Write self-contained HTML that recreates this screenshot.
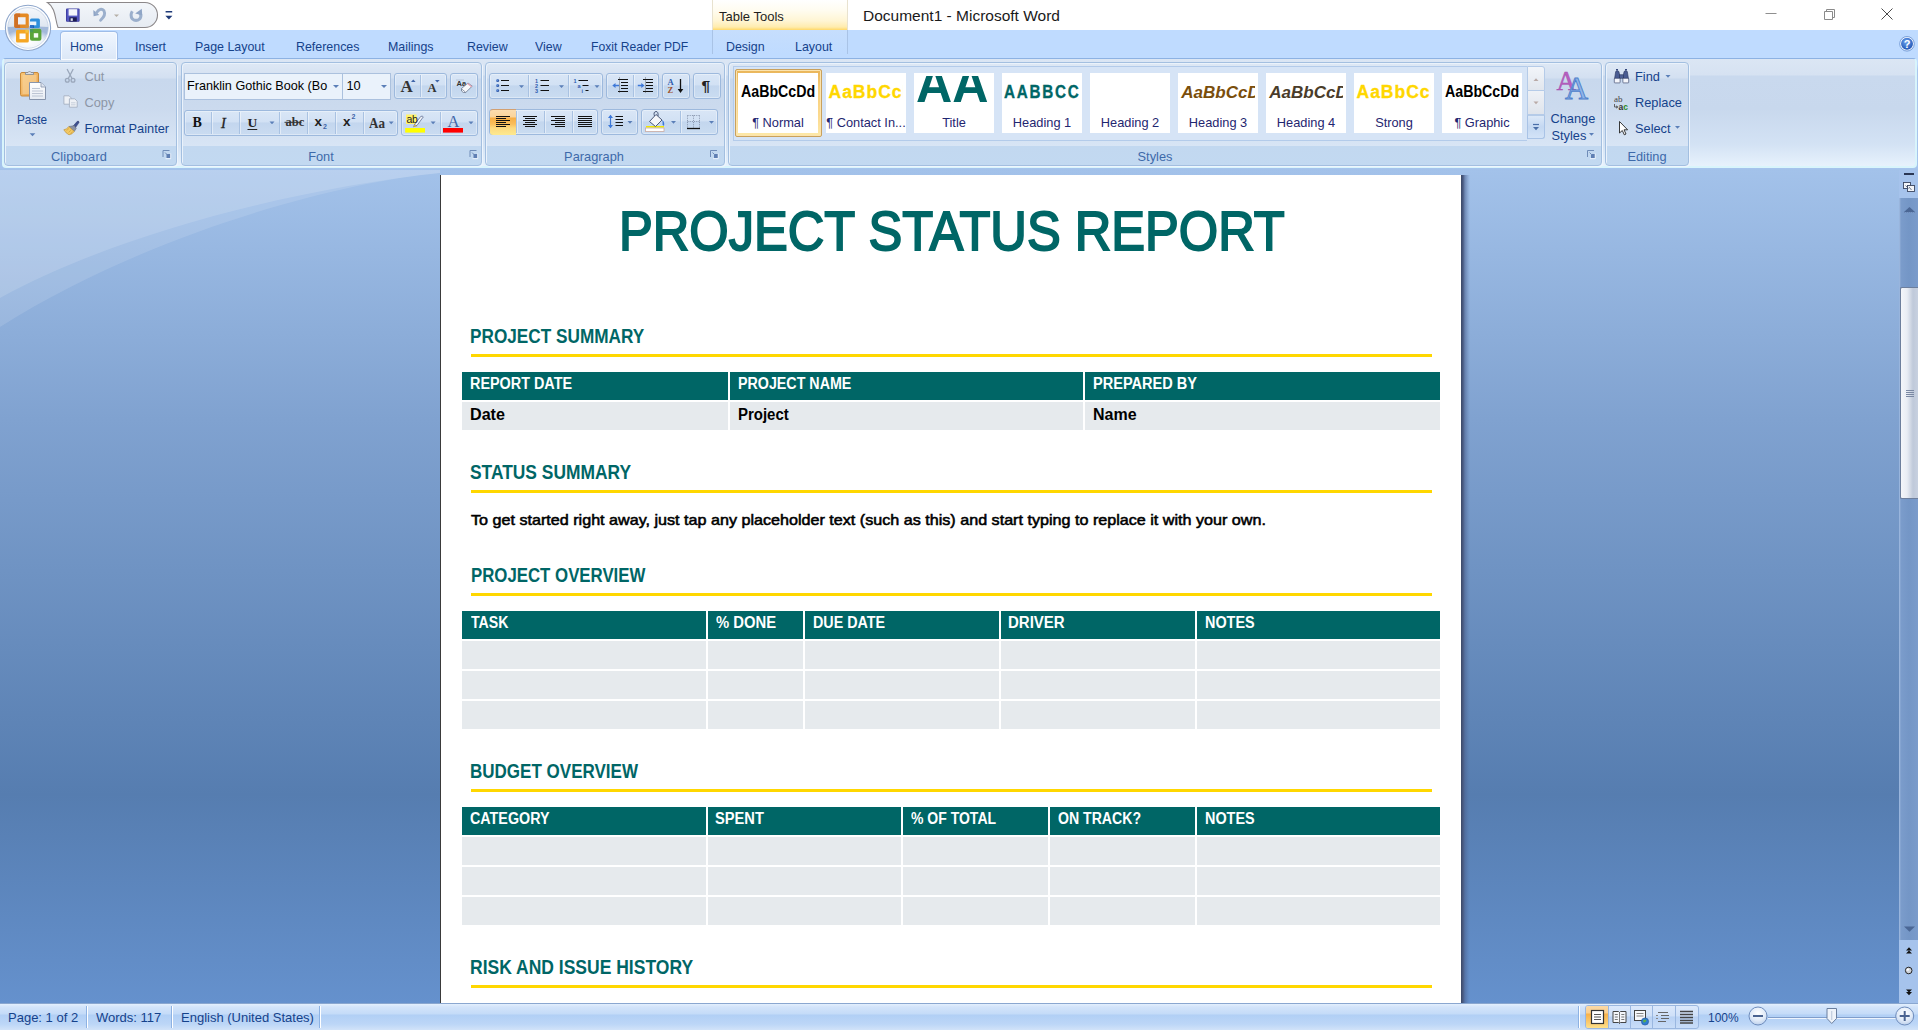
<!DOCTYPE html>
<html lang="en">
<head>
<meta charset="utf-8">
<title>Document1 - Microsoft Word</title>
<style>
*{box-sizing:border-box;margin:0;padding:0}
html,body{width:1918px;height:1030px;overflow:hidden;background:#fff}
body{position:relative;font-family:"Liberation Sans","DejaVu Sans",sans-serif;font-size:12px;color:#15428b}
.abs{position:absolute}
.t{position:absolute;white-space:nowrap;line-height:1}
/* ---------- title bar ---------- */
#titlebar{left:0;top:0;width:1918px;height:30px;background:#fff}
#tabstrip{left:0;top:30px;width:1918px;height:28px;background:#bfdbff}
#ctx{left:712px;top:0;width:136px;height:30px;background:linear-gradient(#ffffff 0%,#fffcf0 35%,#fff5d3 70%,#ffecae 90%,#ffd868 100%);border-left:1px solid #e8e2cf;border-right:1px solid #e8e2cf}
#ctx2{left:712px;top:30px;width:136px;height:24px;border-left:1px solid #a9c3e6;border-right:1px solid #a9c3e6;background:linear-gradient(#c6defd,#bfdbff)}
.tab{z-index:3;position:absolute;transform:scaleX(.97);transform-origin:0 50%;top:39px;font-size:12.8px;color:#15428b;white-space:nowrap;line-height:15px}
#hometab{z-index:2;left:60px;top:31px;width:58px;height:29px;border:1px solid #9ebce8;border-bottom:none;border-radius:4px 4px 0 0;background:linear-gradient(#f0f6fe 0%,#e3edfb 60%,#dbe7f6 100%);box-shadow:inset 0 0 0 1px #f6faff}
/* ---------- ribbon ---------- */
#ribbon{left:2px;top:58px;width:1915px;height:110px;background:linear-gradient(#dbe6f4 0px,#d6e2f2 16px,#c9d9ee 17px,#c8d8ed 50px,#d3e2f4 85px,#e6f1fc 106px,#e9f4fd 110px);border:2px solid #d9f5fc;border-top:1px solid #8db2e3;border-radius:4px}
#ribbonbot{left:0;top:58px;width:1918px;height:112px;background:linear-gradient(#bfdbff 0px,#bfdbff 6px,#a9c6ee 12px,#a5c3ec 112px)}
.grp{position:absolute;top:62px;height:104px;border:1px solid #a3bfe0;border-radius:4px;background:linear-gradient(#dee8f5 0px,#d3e0f1 15px,#c8d8ed 16px,#cbdaee 45px,#d8e5f5 83px,#c2d8f0 83px,#c2d9f1 104px);box-shadow:1px 1px 0 #eef5fd, inset 1px 1px 0 #eaf2fb}
.glabel{position:absolute;top:149px;font-size:12.8px;color:#3e6aaa;white-space:nowrap;line-height:15px;text-align:center}
.launch{position:absolute;top:151px;width:8px;height:8px}
.bg{position:absolute;height:26px;border:1px solid #9db9dd;border-radius:3px;background:linear-gradient(#d9e6f6 0%,#d2e1f4 45%,#c3d6ee 50%,#cadcf1 100%);box-shadow:inset 0 0 0 1px rgba(255,255,255,.35)}
.dv{position:absolute;top:1px;bottom:1px;width:1px;background:#a9c2e2;box-shadow:1px 0 0 rgba(255,255,255,.45)}
.combo{position:absolute;height:27px;border:1px solid #abc1de;background:#eaf2fb;color:#000;font-size:13px}
.arr{position:absolute;width:0;height:0;border-left:3px solid transparent;border-right:3px solid transparent;border-top:3px solid #5b7fb8}
.rt{position:absolute;white-space:nowrap;font-size:12.8px;line-height:15px;color:#15428b}
.gray{color:#8d96a6}
.sf{font-family:"Liberation Serif","DejaVu Serif",serif}
/* ---------- workspace ---------- */
#work{left:0;top:169px;width:1918px;height:834px;background:linear-gradient(#a3c2ea 0%,#80a2d0 30%,#567db0 75%,#6591cd 100%)}
#page{left:440px;top:175px;width:1021px;height:828px;background:#fff;border-left:1px solid #3a3a3a;}
/* document */
.doc{font-family:"Liberation Sans",sans-serif;color:#000}
.h1{position:absolute;left:471px;color:#006666;font-weight:bold;font-size:19px;line-height:20px;white-space:nowrap;transform-origin:0 50%}
.yl{position:absolute;left:471px;width:961px;height:3px;background:#ffd700}
.th{position:absolute;height:28px;background:#006666}
.td{position:absolute;height:28px;background:#e6eaed}
.dt{position:absolute;white-space:nowrap;line-height:1;transform-origin:0 50%;font-family:"Liberation Sans",sans-serif}
/* ---------- status ---------- */
#status{left:0;top:1003px;width:1918px;height:27px;background:linear-gradient(#e3effd 0px,#d3e4fa 3px,#c4dbf8 10px,#b1cff5 11px,#bcd6f7 20px,#d5e5f9 27px);border-top:1px solid #8aa7d0}
.st{position:absolute;top:1010px;font-size:13px;line-height:15px;color:#15428b;white-space:nowrap}
.sdv{position:absolute;top:1006px;width:1px;height:22px;background:#8db2e3;box-shadow:1px 0 0 #fff}
</style>
</head>
<body>
<!-- TITLEBAR -->
<div id="titlebar" class="abs"></div>
<div id="tabstrip" class="abs"></div>
<div id="ctx" class="abs"></div>
<div id="ctx2" class="abs"></div>
<div class="t" style="left:719px;top:9px;font-size:13px;color:#1e1e1e;line-height:15px">Table Tools</div>
<div class="t" style="left:863px;top:7px;font-size:15.500px;color:#1a1a1a;line-height:18px">Document1 - Microsoft Word</div>
<svg class="abs" style="left:1740px;top:0" width="178" height="58" viewBox="0 0 178 58">
<path d="M25.5 13.5 h11" stroke="#8f8f8f" stroke-width="1"/>
<path d="M84.500 11.500 h8 v8 h-8z M86.500 11.500 v-2 h8 v8 h-2" fill="none" stroke="#8a8a8a" stroke-width="1"/>
<path d="M141.5 8.500 l11 11 M152.500 8.500 l-11 11" stroke="#4a4a4a" stroke-width="1"/>
<defs><radialGradient id="hp" cx="45%" cy="35%" r="65%"><stop offset="0" stop-color="#6fa5ef"/><stop offset="1" stop-color="#1b4fb0"/></radialGradient></defs>
<circle cx="167" cy="43.800" r="6.500" fill="url(#hp)" stroke="#f4f8ff" stroke-width="1.100"/>
<circle cx="167" cy="43.800" r="7.300" fill="none" stroke="#5c86c8" stroke-width=".7"/>
<text x="167" y="48" font-family="Liberation Sans, sans-serif" font-size="11" font-weight="bold" fill="#fff" text-anchor="middle">?</text>
</svg>

<svg class="abs" style="left:0;top:0" width="200" height="60" viewBox="0 0 200 60">
<defs>
<linearGradient id="ob1" x1="0" y1="0" x2="0" y2="1"><stop offset="0" stop-color="#f6f8fb"/><stop offset=".5" stop-color="#dde5f0"/><stop offset="1" stop-color="#ffffff"/></linearGradient><radialGradient id="ob3" cx="50%" cy="75%" r="62%"><stop offset="0" stop-color="#ffffff"/><stop offset=".6" stop-color="#eef3f9"/><stop offset="1" stop-color="#a3b9da"/></radialGradient>
<linearGradient id="ob2" x1="0" y1="0" x2="0" y2="1"><stop offset="0" stop-color="#fff" stop-opacity=".95"/><stop offset="1" stop-color="#fff" stop-opacity=".15"/></linearGradient>
<linearGradient id="qat" x1="0" y1="0" x2="0" y2="1"><stop offset="0" stop-color="#f3f6fa"/><stop offset="1" stop-color="#e6ebf2"/></linearGradient>
</defs>
<!-- QAT -->
<path d="M47.5 2.5 H145 A12.5 12.5 0 0 1 145 27.5 H58 C55 20 56 8 47.5 2.5 Z" fill="url(#qat)" stroke="#8b8789" stroke-width="1.100"/>
<!-- office button -->
<circle cx="28" cy="27.900" r="22.600" fill="#fdfeff" stroke="#8ea6cb" stroke-width="1.100"/>
<circle cx="28" cy="27.900" r="20.300" fill="url(#ob1)" stroke="#c3d0e4" stroke-width=".8"/>
<path d="M7.800 27 A20.200 20.200 0 0 0 48.200 27 Q28 25.500 7.800 27Z" fill="url(#ob3)"/>
<!-- logo -->
<g>
<rect x="14.300" y="13.500" width="14.500" height="14.600" rx="1.800" fill="#e58a23"/><path d="M14.300 15.300 q0-1.800 1.800-1.800 h4 v14.600 h-4 q-1.800 0-1.800-1.800z" fill="#cf6f25"/><rect x="18" y="17.200" width="7.600" height="7.300" fill="#eef0f5"/>
<rect x="30" y="18.600" width="9.900" height="9.400" rx="1.500" fill="#2f8fdc"/><rect x="30" y="21.500" width="6.300" height="3.800" fill="#eaf2fb"/><rect x="30" y="25.300" width="4" height="2.700" fill="#1f5fb8"/>
<rect x="16" y="29.700" width="12.800" height="12.800" rx="1.500" fill="#f5a623"/><rect x="19.500" y="33.500" width="6.100" height="5.600" fill="#fffefb"/>
<rect x="30" y="28.800" width="11.400" height="12" rx="2" fill="#5aa53a"/><rect x="33.800" y="33.200" width="4.400" height="4.400" fill="#f7fbf4"/>
<rect x="25.300" y="25" width="3.300" height="3.200" fill="#d9913a"/><rect x="30" y="25.300" width="3" height="2.700" fill="#2a6fc9"/><rect x="25.300" y="29.700" width="3.300" height="3" fill="#f3c23f"/><rect x="30" y="29" width="3.200" height="3.200" fill="#4b9a58"/>
</g>
<!-- save -->
<g>
<rect x="66" y="8.5" width="13.6" height="13.2" rx="1" fill="#3a3a9e"/>
<rect x="66.8" y="9.2" width="12" height="11.8" fill="#5458c0"/>
<rect x="68.6" y="9.2" width="8.6" height="6.4" fill="#f4f6fb"/>
<rect x="69.4" y="17.3" width="7.4" height="4.2" fill="#1c1c50"/>
<rect x="70.6" y="18.3" width="2.2" height="2.6" fill="#dfe3f0"/>
</g>
<!-- undo -->
<path d="M93.300 10 L93.600 16.200 L99.300 15 Z" fill="#8fa5c6"/>
<path d="M96.300 13 Q100.500 7 104 10.800 Q106.200 15 100.600 20.200" fill="none" stroke="#9bafcc" stroke-width="2.900" stroke-linecap="round"/>
<path d="M114 14.4 h5 l-2.5 2.6z" fill="#b5afa6"/>
<!-- redo -->
<path d="M132.300 11.300 Q129.800 15.500 132.300 18.800 Q136 22 139.800 18.800 Q142 15.500 139.600 12.300" fill="none" stroke="#9bafcc" stroke-width="3" stroke-linecap="butt"/>
<path d="M135.200 13.600 L141.800 8.800 L142.200 15.300 Z" fill="#8fa5c6"/>
<!-- customize -->
<rect x="165.6" y="11" width="6.6" height="1.5" fill="#1f3a78"/>
<path d="M165.4 15.7 h7 l-3.5 3.7z" fill="#1f3a78"/>
</svg>

<!-- TABS -->
<div id="hometab" class="abs"></div>
<div class="tab" style="left:70px">Home</div>
<div class="tab" style="left:135px">Insert</div>
<div class="tab" style="left:195px">Page Layout</div>
<div class="tab" style="left:296px">References</div>
<div class="tab" style="left:388px">Mailings</div>
<div class="tab" style="left:467px">Review</div>
<div class="tab" style="left:535px">View</div>
<div class="tab" style="left:591px;transform:scaleX(.95)">Foxit Reader PDF</div>
<div class="tab" style="left:726px">Design</div>
<div class="tab" style="left:795px">Layout</div>
<!-- RIBBON -->
<div id="ribbonbot" class="abs"></div>
<div id="ribbon" class="abs"></div>
<div class="grp" style="left:4px;width:173px"></div>
<div class="grp" style="left:181px;width:301px"></div>
<div class="grp" style="left:485px;width:240px"></div>
<div class="grp" style="left:728px;width:874px"></div>
<div class="grp" style="left:1605px;width:84px"></div>
<div class="glabel" style="left:3px;width:152px;letter-spacing:.15px">Clipboard</div>
<div class="glabel" style="left:181px;width:280px">Font</div>
<div class="glabel" style="left:485px;width:218px">Paragraph</div>
<div class="glabel" style="left:728px;width:854px">Styles</div>
<div class="glabel" style="left:1605px;width:84px">Editing</div>
<svg class="abs" style="left:0;top:58px" width="180" height="112" viewBox="0 58 180 112">
<defs>
<linearGradient id="pb" x1="0" y1="0" x2="1" y2="1"><stop offset="0" stop-color="#f9c778"/><stop offset="1" stop-color="#e9a04a"/></linearGradient>
<linearGradient id="pp" x1="0" y1="0" x2="0" y2="1"><stop offset="0" stop-color="#ffffff"/><stop offset="1" stop-color="#e6ebf3"/></linearGradient>
</defs>
<!-- paste -->
<rect x="20.5" y="72.5" width="18" height="23.500" rx="1.500" fill="url(#pb)" stroke="#c98a3a" stroke-width="1"/>
<rect x="22.500" y="75" width="14" height="19" fill="#f7d9a6" opacity=".55"/>
<path d="M25.500 74.500 v-2 h2.500 q1.500-3 3 0 h2.500 v2z" fill="#d9dde4" stroke="#7d8694" stroke-width=".8"/>
<path d="M29.500 82.500 h11.500 l4.500 4.500 v12.500 h-16z" fill="url(#pp)" stroke="#8795ad" stroke-width="1"/>
<path d="M41 82.500 v4.500 h4.500" fill="#dfe5ef" stroke="#8795ad" stroke-width=".8"/>
<path d="M32 88.500 h8 M32 91 h11 M32 93.500 h11 M32 96 h11" stroke="#b7c0cf" stroke-width=".9"/>
<path d="M29.700 133.200 h5.600 l-2.800 3z" fill="#5b7fb8"/>
<!-- cut (disabled) -->
<g stroke="#9aa7bb" stroke-width="1.300" fill="none" stroke-linecap="round">
<path d="M67.300 69.500 L72 78.500 M73 69.500 L68.300 78.500"/>
<circle cx="67.300" cy="80.300" r="1.900"/><circle cx="73" cy="80.300" r="1.900"/>
</g>
<!-- copy (disabled) -->
<g fill="#eef1f6" stroke="#a5b0c2" stroke-width=".9">
<path d="M63.900 95.800 h5.200 l2.200 2.200 v6.200 h-7.400z"/>
<path d="M69.400 98.800 h5.400 l2.400 2.400 v6 h-7.800z"/>
<path d="M71 102.800 h4.500 M71 104.800 h4.500" stroke="#bcc5d3" stroke-width=".8"/>
</g>
<!-- format painter -->
<g>
<path d="M72.500 126.800 L77.300 121.300 Q79 120.600 79 122.600 L74.800 128.600z" fill="#3d4f8f" stroke="#2a3768" stroke-width=".5"/>
<path d="M69 126.500 L74.300 125.600 L76.300 128.400 L74.300 131.400 Z" fill="#8b93a6" stroke="#5f677a" stroke-width=".5"/>
<path d="M63.800 129.800 Q66.500 129.600 68.800 126.600 L74.300 131.400 Q72.500 134.300 69 134.800 Q66 133.500 63.800 129.800Z" fill="#f3c964" stroke="#b98a2c" stroke-width=".6"/>
<path d="M66.500 130.600 l2.500-2.200 M68.600 132.400 l2.600-2.400 M70.600 133.600 l2.200-2.200" stroke="#c99a3a" stroke-width=".6"/>
</g>
<!-- launcher -->
<g id="lnch"><path d="M163 150.500 h6.500 M163 150.500 v6.500" stroke="#6f8cb8" stroke-width="1" fill="none"/><rect x="166.500" y="154" width="4" height="4" fill="#5f7fb3"/><path d="M165 152.500 l2.500 2.500" stroke="#6f8cb8" stroke-width="1"/><path d="M170.700 153.500v5.200h-5.200" stroke="#f5f9fe" stroke-width=".8" fill="none"/></g>
</svg>
<div class="rt" style="left:16.800px;top:112px;transform:scaleX(.92);transform-origin:0 50%">Paste</div>
<div class="rt gray" style="left:84.500px;top:69px">Cut</div>
<div class="rt gray" style="left:84.500px;top:95.300px">Copy</div>
<div class="rt" style="left:84.500px;top:121px">Format Painter</div>

<div class="combo" style="left:184px;top:73px;width:159px"></div>
<div class="combo" style="left:342px;top:73px;width:49px"></div>
<div class="t" style="left:187px;top:78px;font-size:12.800px;line-height:15px;color:#000;transform:scaleX(.986);transform-origin:0 50%">Franklin Gothic Book (Bo</div>
<div class="t" style="left:346.500px;top:78px;font-size:12.800px;line-height:15px;color:#000">10</div>
<div class="arr" style="left:332.500px;top:85px"></div>
<div class="arr" style="left:380.500px;top:85px"></div>
<div class="bg" style="left:394px;top:73px;width:53px"><div class="dv" style="left:25px"></div></div>
<div class="bg" style="left:450px;top:73px;width:28px"></div>
<div class="bg" style="left:184px;top:110px;width:214px"><div class="dv" style="left:26px"></div><div class="dv" style="left:54px"></div><div class="dv" style="left:94px"></div><div class="dv" style="left:122px"></div><div class="dv" style="left:150px"></div><div class="dv" style="left:178px"></div></div>
<div class="bg" style="left:401px;top:110px;width:77px"><div class="dv" style="left:38px"></div></div>
<!-- grow / shrink -->
<div class="t sf" style="left:400.500px;top:77.500px;font-size:17px;font-weight:bold;color:#333">A</div>
<div class="t sf" style="left:427.500px;top:81.500px;font-size:12.500px;font-weight:bold;color:#333">A</div>
<svg class="abs" style="left:180px;top:58px" width="305" height="112" viewBox="180 58 305 112">
<path d="M411 82 l2.300-2.600 l2.300 2.600z" fill="#3f65a8"/>
<path d="M435 80 h4.600 l-2.300 2.600z" fill="#3f65a8"/>
<!-- clear formatting -->
<g>
<text x="456.500" y="85.500" font-family="Liberation Sans, sans-serif" font-size="7.500" fill="#333" font-weight="bold">Aa</text>
<path d="M456 80 h8" stroke="#8a97ad" stroke-width=".4"/>
<path d="M461.500 88.500 l6.500-5.500 l4.200 3.200 l-6.500 6.300 q-2.600 .7 -4.200-1.500z" fill="#f7f8fb" stroke="#66738c" stroke-width=".8"/>
<path d="M461.700 89 l4 3.300" stroke="#66738c" stroke-width=".7"/>
<path d="M467.500 83.500 l4.200 3.200" stroke="#e8a0b0" stroke-width="1.200"/>
</g>
<!-- underline dropdown etc -->
<path d="M269.500 121.500 h5 l-2.500 2.800z M388.700 121.500 h5 l-2.500 2.800z M430.600 121.500 h5 l-2.500 2.800z M468.500 121.500 h5 l-2.500 2.800z" fill="#5b7fb8"/>
<!-- strike -->
<path d="M284.500 122.300 h17" stroke="#333" stroke-width="1"/>
<!-- highlight -->
<rect x="405.200" y="128" width="19.800" height="4.600" fill="#ffff00"/>
<rect x="406" y="114.500" width="10.500" height="9.500" fill="#fff36a"/>
<path d="M414.500 124.500 l6.200-8 q1.600-1 2.600 .4 l-6.200 8.400 l-3.400 1.600z" fill="#f2f4f8" stroke="#4d5f86" stroke-width=".7"/>
<path d="M414.500 124.500 l2.600 1.600" stroke="#4d5f86" stroke-width=".6"/>
<path d="M413.700 126.900 l.8-2.400 l2.400 1.400z" fill="#d9b24a"/>
<!-- font color -->
<rect x="443" y="128" width="20" height="4.600" fill="#ff0000"/>
</svg>
<div class="t sf" style="left:192.500px;top:115.500px;font-size:14px;font-weight:bold;color:#111">B</div>
<div class="t sf" style="left:221px;top:115.500px;font-size:14.500px;font-style:italic;color:#222;-webkit-text-stroke:.3px #222">I</div>
<div class="t sf" style="left:247.500px;top:115.500px;font-size:13.500px;font-weight:bold;color:#222;text-decoration:underline;text-underline-offset:1.500px">U</div>
<div class="t sf" style="left:285.500px;top:116px;font-size:12.500px;color:#333;font-weight:bold">abc</div>
<div class="t" style="left:314.500px;top:114.500px;font-size:13.500px;font-weight:bold;color:#222">x</div><div class="t" style="left:323px;top:122.500px;font-size:7px;font-weight:bold;color:#3f65a8">2</div>
<div class="t" style="left:343px;top:114.500px;font-size:13.500px;font-weight:bold;color:#222">x</div><div class="t" style="left:351.500px;top:113px;font-size:7px;font-weight:bold;color:#3f65a8">2</div>
<div class="t sf" style="left:368.500px;top:115.500px;font-size:14.500px;font-weight:bold;color:#333;transform:scaleX(.9);transform-origin:0 50%">Aa</div>
<div class="t" style="left:406.500px;top:114px;font-size:10.500px;color:#222;letter-spacing:-.3px">ab</div>
<div class="t sf" style="left:447.500px;top:113.500px;font-size:16.500px;color:#3f65a8">A</div>
<svg class="abs" style="left:467px;top:148px" width="12" height="12" viewBox="160 148 12 12"><path d="M163 150.500 h6.500 M163 150.500 v6.500" stroke="#6f8cb8" stroke-width="1" fill="none"/><rect x="166.500" y="154" width="4" height="4" fill="#5f7fb3"/><path d="M165 152.500 l2.500 2.500" stroke="#6f8cb8" stroke-width="1"/><path d="M170.700 153.500v5.200h-5.200" stroke="#f5f9fe" stroke-width=".8" fill="none"/></svg>

<div class="bg" style="left:489px;top:73px;width:114px"><div class="dv" style="left:38px"></div><div class="dv" style="left:78px"></div></div>
<div class="bg" style="left:606px;top:73px;width:53px"><div class="dv" style="left:26px"></div></div>
<div class="bg" style="left:662px;top:73px;width:28px"></div>
<div class="bg" style="left:693px;top:73px;width:28px"></div>
<div class="bg" style="left:489px;top:109px;width:109px"><div class="dv" style="left:26px"></div><div class="dv" style="left:54px"></div><div class="dv" style="left:82px"></div></div>
<div class="abs" style="left:490px;top:109px;width:25.500px;height:26px;border-radius:3px 0 0 3px;border-top:1px solid #d3a071;background:linear-gradient(#fbdcae 0px,#fbd49a 7px,#f7ae45 8px,#f9bd5b 14px,#fcd97f 18px,#fde98f 25px)"></div>
<div class="bg" style="left:601px;top:109px;width:37px"></div>
<div class="bg" style="left:641px;top:109px;width:77px"><div class="dv" style="left:38px"></div></div>
<svg class="abs" style="left:484px;top:58px" width="244" height="112" viewBox="484 58 244 112">
<defs><radialGradient id="bl" cx="35%" cy="35%" r="70%"><stop offset="0" stop-color="#6fa0e8"/><stop offset="1" stop-color="#173f93"/></radialGradient></defs>
<!-- bullets -->
<g fill="url(#bl)"><circle cx="497.600" cy="80.600" r="1.500"/><circle cx="497.600" cy="85.600" r="1.500"/><circle cx="497.600" cy="90.600" r="1.500"/></g>
<path d="M501 80.500 h8 M501 85.500 h8 M501 90.500 h8" stroke="#111" stroke-width="1.100"/>
<!-- numbering -->
<g font-family="Liberation Sans, sans-serif" font-size="5.500" font-weight="bold" fill="#2f5cae"><text x="535" y="82.500">1</text><text x="535" y="87.600">2</text><text x="535" y="92.700">3</text></g>
<path d="M540.500 80.500 h8.500 M540.500 85.500 h8.500 M540.500 90.500 h8.500" stroke="#111" stroke-width="1.100"/>
<!-- multilevel -->
<g font-family="Liberation Sans, sans-serif" font-size="5.500" font-weight="bold" fill="#2f5cae"><text x="573.500" y="82.500">1</text><text x="577.500" y="87.600">a</text><text x="581.500" y="93">i</text></g>
<path d="M578.500 80.500 h9.500 M582.500 85.500 h6 M585.500 90.500 h3" stroke="#111" stroke-width="1.100"/>
<!-- dropdown arrows row1 -->
<path d="M519 85.300 h5 l-2.500 2.800z M559 85.300 h5 l-2.500 2.800z M594.500 85.300 h5 l-2.500 2.800z" fill="#5b7fb8"/>
<!-- decrease indent -->
<path d="M618 79.500 h10 M621 82.500 h7 M621 85.500 h7 M621 88.500 h7 M618 91.500 h10" stroke="#111" stroke-width="1.100"/>
<path d="M619.500 77.500 v16" stroke="#333" stroke-width=".7" stroke-dasharray="1 1"/>
<path d="M612.300 85.500 l3.200-2.600 v1.800 h3.500 v1.600 h-3.500 v1.800z" fill="#3d78d8"/>
<!-- increase indent -->
<path d="M643 79.500 h10 M646 82.500 h7 M646 85.500 h7 M646 88.500 h7 M643 91.500 h10" stroke="#111" stroke-width="1.100"/>
<path d="M645.500 77.500 v16" stroke="#333" stroke-width=".7" stroke-dasharray="1 1"/>
<path d="M644.500 85.500 l-3.200-2.600 v1.800 h-3.500 v1.600 h3.500 v1.800z" fill="#3d78d8"/>
<!-- sort -->
<text x="667.500" y="84.500" font-family="Liberation Serif, serif" font-size="8.500" font-weight="bold" fill="#2f5cae">A</text>
<text x="667.500" y="93" font-family="Liberation Serif, serif" font-size="8.500" font-weight="bold" fill="#a0522d">Z</text>
<path d="M680.500 79 v11" stroke="#111" stroke-width="1.300"/><path d="M677.700 89 h5.600 l-2.800 4z" fill="#111"/>
<!-- align icons -->
<path d="M496 116.500 h14 M496 118.500 h10 M496 120.500 h14 M496 122.500 h10 M496 124.500 h14 M496 126.500 h10" stroke="#111" stroke-width="1"/>
<path d="M523 116.500 h14 M525 118.500 h10 M523 120.500 h14 M525 122.500 h10 M523 124.500 h14 M525 126.500 h10" stroke="#111" stroke-width="1"/>
<path d="M551 116.500 h14 M555 118.500 h10 M551 120.500 h14 M555 122.500 h10 M551 124.500 h14 M555 126.500 h10" stroke="#111" stroke-width="1"/>
<path d="M578 116.500 h14 M578 118.500 h14 M578 120.500 h14 M578 122.500 h14 M578 124.500 h14 M578 126.500 h14" stroke="#111" stroke-width="1"/>
<!-- line spacing -->
<path d="M610.500 115.500 v12" stroke="#3d78d8" stroke-width="1.200"/><path d="M608 118 l2.500-3.200 l2.500 3.200z M608 125 l2.500 3.200 l2.500-3.200z" fill="#3d78d8"/>
<path d="M615.500 116.500 h7.500 M615.500 119.500 h7.500 M615.500 122.500 h7.500 M615.500 125.500 h7.500" stroke="#111" stroke-width="1.100"/>
<path d="M627.500 121 h5 l-2.500 2.800z M671 121 h5 l-2.500 2.800z M709 121 h5 l-2.500 2.800z" fill="#5b7fb8"/>
<!-- shading bucket --><g transform="translate(0 -2.500)">
<rect x="645.500" y="130.500" width="18.500" height="3.500" fill="#fff" stroke="#c9a9a0" stroke-width=".8"/>
<path d="M646 129.200 h18" stroke="#f2e600" stroke-width="1.400"/>
<path d="M649.500 124 l6.500-7 l6 5.500 l-6.500 6.500z" fill="#f4f6fa" stroke="#3b4a6b" stroke-width=".9"/>
<path d="M654.500 118.500 q-1.500-4 1.500-4.500 q2.500 0 2 4.500" fill="none" stroke="#3b4a6b" stroke-width=".9"/>
<path d="M662 122.500 q2.500 1 2.200 5 q-.2 1.500 -1.600 0 q.4-3 -.6-5z" fill="#3d78d8"/>
</g><!-- borders -->
<g stroke="#7d8aa3" stroke-width=".9" stroke-dasharray="1 1.200" fill="none"><path d="M687.500 115.500 h12 M687.500 121.500 h12 M687.500 115.500 v12 M693.500 115.500 v12 M699.500 115.500 v12"/></g>
<path d="M687 128.500 h13" stroke="#111" stroke-width="1.300"/>
<!-- launcher -->
<g transform="translate(547.500 0)"><path d="M163 150.500 h6.500 M163 150.500 v6.500" stroke="#6f8cb8" stroke-width="1" fill="none"/><rect x="166.500" y="154" width="4" height="4" fill="#5f7fb3"/><path d="M165 152.500 l2.500 2.500" stroke="#6f8cb8" stroke-width="1"/><path d="M170.700 153.500v5.200h-5.200" stroke="#f5f9fe" stroke-width=".8" fill="none"/></g>
</svg>
<div class="t" style="left:701.500px;top:77.500px;font-size:15.500px;color:#222;font-weight:bold">¶</div>

<div class="abs" style="left:733px;top:66px;width:794px;height:75px;background:#d6e4f6;border:1px solid #b3cbea;border-right:none"></div>
<div class="abs" style="left:735px;top:69px;width:87px;height:68px;border-radius:2px;background:linear-gradient(#e9b55a,#f8cf79 30%,#fbd98f 70%,#fde9a8);border:1px solid #c9a15c;box-shadow:inset 0 0 0 1px #fbe3ae"></div>
<div class="abs" style="left:738px;top:73px;width:80px;height:60px;background:#fff"></div>
<div class="abs" style="left:740px;top:76px;width:75px;height:30px;overflow:hidden"><div class="t" style="left:1px;top:7.9px"><span style="font-weight:bold;font-size:16px;color:#000;display:inline-block;transform:scaleX(.888);transform-origin:0 50%">AaBbCcDd</span></div></div>
<div class="t" style="left:738px;top:115px;width:80px;text-align:center;font-size:12.8px;line-height:15px;color:#1f2670">¶ Normal</div>
<div class="abs" style="left:826px;top:73px;width:80px;height:60px;background:#fff"></div>
<div class="abs" style="left:828px;top:76px;width:75px;height:30px;overflow:hidden"><div class="t" style="left:0.5px;top:7.6px"><span style="font-weight:bold;font-size:17.5px;color:#ffd700;-webkit-text-stroke:.3px #ffd700;letter-spacing:1px">AaBbCcDd</span></div></div>
<div class="t" style="left:826px;top:115px;width:80px;text-align:center;font-size:12.8px;line-height:15px;color:#1f2670">¶ Contact In...</div>
<div class="abs" style="left:914px;top:73px;width:80px;height:60px;background:#fff"></div>
<div class="abs" style="left:914px;top:76px;width:78px;height:26px;overflow:hidden"><div class="t" style="left:1.5px;top:-18.3px"><span style="font-weight:bold;font-size:52px;color:#006666;display:inline-block;transform:scaleX(.965);transform-origin:0 50%">AA</span></div></div>
<div class="t" style="left:914px;top:115px;width:80px;text-align:center;font-size:12.8px;line-height:15px;color:#1f2670">Title</div>
<div class="abs" style="left:1002px;top:73px;width:80px;height:60px;background:#fff"></div>
<div class="abs" style="left:1004px;top:76px;width:75px;height:30px;overflow:hidden"><div class="t" style="left:0.3999999999999999px;top:6.3px"><span style="font-weight:bold;font-size:19px;color:#006666;-webkit-text-stroke:.35px #006666;letter-spacing:2.2px;display:inline-block;transform:scaleX(.8);transform-origin:0 50%">AABBCC</span></div></div>
<div class="t" style="left:1002px;top:115px;width:80px;text-align:center;font-size:12.8px;line-height:15px;color:#1f2670">Heading 1</div>
<div class="abs" style="left:1090px;top:73px;width:80px;height:60px;background:#fff"></div>
<div class="t" style="left:1090px;top:115px;width:80px;text-align:center;font-size:12.8px;line-height:15px;color:#1f2670">Heading 2</div>
<div class="abs" style="left:1178px;top:73px;width:80px;height:60px;background:#fff"></div>
<div class="abs" style="left:1180px;top:76px;width:75px;height:30px;overflow:hidden"><div class="t" style="left:1.2999999999999998px;top:7.6px"><span style="font-weight:bold;font-style:italic;font-size:17px;color:#7a4e0c">AaBbCcDd</span></div></div>
<div class="t" style="left:1178px;top:115px;width:80px;text-align:center;font-size:12.8px;line-height:15px;color:#1f2670">Heading 3</div>
<div class="abs" style="left:1266px;top:73px;width:80px;height:60px;background:#fff"></div>
<div class="abs" style="left:1268px;top:76px;width:75px;height:30px;overflow:hidden"><div class="t" style="left:1.2999999999999998px;top:7.6px"><span style="font-weight:bold;font-style:italic;font-size:17px;color:#4a3c2a">AaBbCcDd</span></div></div>
<div class="t" style="left:1266px;top:115px;width:80px;text-align:center;font-size:12.8px;line-height:15px;color:#1f2670">Heading 4</div>
<div class="abs" style="left:1354px;top:73px;width:80px;height:60px;background:#fff"></div>
<div class="abs" style="left:1356px;top:76px;width:75px;height:30px;overflow:hidden"><div class="t" style="left:0.5px;top:7.6px"><span style="font-weight:bold;font-size:17.5px;color:#ffd700;-webkit-text-stroke:.3px #ffd700;letter-spacing:1px">AaBbCcDd</span></div></div>
<div class="t" style="left:1354px;top:115px;width:80px;text-align:center;font-size:12.8px;line-height:15px;color:#1f2670">Strong</div>
<div class="abs" style="left:1442px;top:73px;width:80px;height:60px;background:#fff"></div>
<div class="abs" style="left:1444px;top:76px;width:75px;height:30px;overflow:hidden"><div class="t" style="left:1px;top:7.9px"><span style="font-weight:bold;font-size:16px;color:#000;display:inline-block;transform:scaleX(.888);transform-origin:0 50%">AaBbCcDd</span></div></div>
<div class="t" style="left:1442px;top:115px;width:80px;text-align:center;font-size:12.8px;line-height:15px;color:#1f2670">¶ Graphic</div>
<!-- gallery scroll buttons -->
<div class="abs" style="left:1527px;top:66px;width:18px;height:25px;border:1px solid #b5cbe8;border-radius:0 3px 0 0;background:linear-gradient(#f2f5f9,#e1e6ee)"></div>
<div class="abs" style="left:1527px;top:91px;width:18px;height:24px;border:1px solid #b5cbe8;border-top:none;background:linear-gradient(#eef1f6,#dfe4ec)"></div>
<div class="abs" style="left:1527px;top:115px;width:18px;height:24px;border:1px solid #a9c3e6;border-top:1px solid #b5cbe8;border-radius:0 0 3px 0;background:linear-gradient(#dce8f8,#c4d8f2 50%,#d3e3f7)"></div>
<svg class="abs" style="left:1525px;top:58px" width="170" height="112" viewBox="1525 58 170 112">
<path d="M1533.500 81 l2.500-2.800 l2.500 2.800z" fill="#b9aaa6"/>
<path d="M1533.500 101.500 h5 l-2.500 2.800z" fill="#b9aaa6"/>
<path d="M1533 124.500 h6" stroke="#4a6ea8" stroke-width="1.200"/><path d="M1533 127 h6 l-3 3.300z" fill="#4a6ea8"/>
<!-- change styles icon -->
<text x="1556.500" y="90" font-family="Liberation Serif, serif" font-size="27" fill="#b85fc0" stroke="#a44fb0" stroke-width=".5">A</text>
<text x="1565" y="99" font-family="Liberation Serif, serif" font-size="32" fill="#8fb5ea" stroke="#4f7fca" stroke-width=".9">A</text>
<path d="M1589 133 h5 l-2.500 2.800z" fill="#5b7fb8"/>
<!-- launcher -->
<g transform="translate(1424.500 0)"><path d="M163 150.500 h6.500 M163 150.500 v6.500" stroke="#6f8cb8" stroke-width="1" fill="none"/><rect x="166.500" y="154" width="4" height="4" fill="#5f7fb3"/><path d="M165 152.500 l2.500 2.500" stroke="#6f8cb8" stroke-width="1"/><path d="M170.700 153.500v5.200h-5.200" stroke="#f5f9fe" stroke-width=".8" fill="none"/></g>
<!-- find (binoculars) -->
<g stroke="#27345c" stroke-width=".6">
<path d="M1614.500 79 l1.200-7.500 q1.600-1.600 3.200 0 l1.100 5 v2.500z" fill="#4a5c92"/>
<path d="M1628.500 79 l-1.200-7.500 q-1.600-1.600 -3.200 0 l-1.100 5 v2.500z" fill="#4a5c92"/>
<rect x="1619.700" y="74.800" width="3.600" height="3.400" fill="#4f6196"/>
<rect x="1614.300" y="78.300" width="5.800" height="4.600" rx=".6" fill="#f4f6fb"/><rect x="1622.900" y="78.300" width="5.800" height="4.600" rx=".6" fill="#f4f6fb"/>
</g>
<path d="M1616 69.800 h2 M1625 69.800 h2" stroke="#34477c" stroke-width="1.400"/>
<path d="M1665.500 75 h5 l-2.500 2.800z M1675 126 h5 l-2.500 2.800z" fill="#5b7fb8"/>
<!-- replace -->
<text x="1614" y="102" font-family="Liberation Serif, serif" font-size="9" fill="#444">ab</text>
<text x="1618.500" y="109.500" font-family="Liberation Sans, sans-serif" font-size="8.500" font-weight="bold" fill="#333">a<tspan fill="#2b8a2b">c</tspan></text>
<path d="M1614.500 104 v3 h3" stroke="#555" stroke-width=".9" fill="none"/><path d="M1616.300 105.300 l2 1.700 l-2 1.700z" fill="#555"/>
<!-- select cursor -->
<path d="M1619.500 121.500 v11.500 l2.800-2.500 l2 4.300 l1.700-.8 l-2-4.200 h3.600z" fill="#fff" stroke="#222" stroke-width=".9" stroke-linejoin="round"/>
</svg>
<div class="rt" style="left:1550.500px;top:111px">Change</div>
<div class="rt" style="left:1551.500px;top:128px">Styles</div>
<div class="rt" style="left:1635px;top:68.500px">Find</div>
<div class="rt" style="left:1635px;top:94.500px">Replace</div>
<div class="rt" style="left:1635px;top:120.500px">Select</div>


<!-- WORKSPACE -->
<div id="work" class="abs"></div>
<svg class="abs" style="left:0;top:170px" width="460" height="170" viewBox="0 170 460 170">
<path d="M0 170 H440 V173 C300 188 120 232 0 298 Z" fill="#fff" opacity=".14"/>
<path d="M0 170 H440 V173 C330 183 140 238 0 327 Z" fill="#fff" opacity=".12"/>
</svg>

<div id="page" class="abs"></div>
<div class="abs" style="left:1461px;top:175px;width:9px;height:828px;background:linear-gradient(90deg,#3b4866 0px,#4a5b82 2px,rgba(74,95,140,.55) 4px,rgba(80,105,155,.2) 7px,rgba(80,105,155,0) 9px)"></div>
<div class="yl" style="top:354px"></div>
<div class="yl" style="top:490px"></div>
<div class="yl" style="top:593px"></div>
<div class="yl" style="top:789px"></div>
<div class="yl" style="top:985px"></div>
<div class="th" style="left:462px;top:372px;width:266px"></div>
<div class="th" style="left:730px;top:372px;width:353px"></div>
<div class="th" style="left:1085px;top:372px;width:355px"></div>
<div class="td" style="left:462px;top:402px;width:266px"></div>
<div class="td" style="left:730px;top:402px;width:353px"></div>
<div class="td" style="left:1085px;top:402px;width:355px"></div>
<div class="th" style="left:462px;top:611px;width:244px"></div>
<div class="th" style="left:708px;top:611px;width:95px"></div>
<div class="th" style="left:805px;top:611px;width:194px"></div>
<div class="th" style="left:1001px;top:611px;width:194px"></div>
<div class="th" style="left:1197px;top:611px;width:243px"></div>
<div class="td" style="left:462px;top:641px;width:244px"></div>
<div class="td" style="left:708px;top:641px;width:95px"></div>
<div class="td" style="left:805px;top:641px;width:194px"></div>
<div class="td" style="left:1001px;top:641px;width:194px"></div>
<div class="td" style="left:1197px;top:641px;width:243px"></div>
<div class="td" style="left:462px;top:671px;width:244px"></div>
<div class="td" style="left:708px;top:671px;width:95px"></div>
<div class="td" style="left:805px;top:671px;width:194px"></div>
<div class="td" style="left:1001px;top:671px;width:194px"></div>
<div class="td" style="left:1197px;top:671px;width:243px"></div>
<div class="td" style="left:462px;top:701px;width:244px"></div>
<div class="td" style="left:708px;top:701px;width:95px"></div>
<div class="td" style="left:805px;top:701px;width:194px"></div>
<div class="td" style="left:1001px;top:701px;width:194px"></div>
<div class="td" style="left:1197px;top:701px;width:243px"></div>
<div class="th" style="left:462px;top:807px;width:244px"></div>
<div class="th" style="left:708px;top:807px;width:193px"></div>
<div class="th" style="left:903px;top:807px;width:145px"></div>
<div class="th" style="left:1050px;top:807px;width:145px"></div>
<div class="th" style="left:1197px;top:807px;width:243px"></div>
<div class="td" style="left:462px;top:837px;width:244px"></div>
<div class="td" style="left:708px;top:837px;width:193px"></div>
<div class="td" style="left:903px;top:837px;width:145px"></div>
<div class="td" style="left:1050px;top:837px;width:145px"></div>
<div class="td" style="left:1197px;top:837px;width:243px"></div>
<div class="td" style="left:462px;top:867px;width:244px"></div>
<div class="td" style="left:708px;top:867px;width:193px"></div>
<div class="td" style="left:903px;top:867px;width:145px"></div>
<div class="td" style="left:1050px;top:867px;width:145px"></div>
<div class="td" style="left:1197px;top:867px;width:243px"></div>
<div class="td" style="left:462px;top:897px;width:244px"></div>
<div class="td" style="left:708px;top:897px;width:193px"></div>
<div class="td" style="left:903px;top:897px;width:145px"></div>
<div class="td" style="left:1050px;top:897px;width:145px"></div>
<div class="td" style="left:1197px;top:897px;width:243px"></div>
<div class="dt" style="left:619.4px;top:202.8px;font-size:56px;font-weight:normal;color:#006666;-webkit-text-stroke:1.9px #006666;transform:scaleX(0.9041)">PROJECT STATUS REPORT</div>
<div class="dt" style="left:470.4px;top:326.1px;font-size:20px;font-weight:bold;color:#006666;transform:scaleX(0.8598)">PROJECT SUMMARY</div>
<div class="dt" style="left:470.3px;top:461.8px;font-size:20px;font-weight:bold;color:#006666;transform:scaleX(0.8693)">STATUS SUMMARY</div>
<div class="dt" style="left:470.5px;top:564.8px;font-size:20px;font-weight:bold;color:#006666;transform:scaleX(0.8404)">PROJECT OVERVIEW</div>
<div class="dt" style="left:470.4px;top:760.7px;font-size:20px;font-weight:bold;color:#006666;transform:scaleX(0.8507)">BUDGET OVERVIEW</div>
<div class="dt" style="left:470.4px;top:956.8px;font-size:20px;font-weight:bold;color:#006666;transform:scaleX(0.8753)">RISK AND ISSUE HISTORY</div>
<div class="dt" style="left:470.4px;top:375.7px;font-size:16px;font-weight:bold;color:#fff;transform:scaleX(0.8991)">REPORT DATE</div>
<div class="dt" style="left:737.5px;top:375.7px;font-size:16px;font-weight:bold;color:#fff;transform:scaleX(0.8914)">PROJECT NAME</div>
<div class="dt" style="left:1092.7px;top:375.7px;font-size:16px;font-weight:bold;color:#fff;transform:scaleX(0.9086)">PREPARED BY</div>
<div class="dt" style="left:470.3px;top:406.5px;font-size:16px;font-weight:bold;color:#000;transform:scaleX(1.0065)">Date</div>
<div class="dt" style="left:737.5px;top:406.5px;font-size:16px;font-weight:bold;color:#000;transform:scaleX(0.9354)">Project</div>
<div class="dt" style="left:1092.6px;top:406.5px;font-size:16px;font-weight:bold;color:#000;transform:scaleX(0.9988)">Name</div>
<div class="dt" style="left:471.3px;top:512.1px;font-size:15px;font-weight:normal;color:#000;-webkit-text-stroke:0.55px #000;transform:scaleX(1.0753)">To get started right away, just tap any placeholder text (such as this) and start typing to replace it with your own.</div>
<div class="dt" style="left:471.3px;top:614.7px;font-size:16px;font-weight:bold;color:#fff;transform:scaleX(0.8840)">TASK</div>
<div class="dt" style="left:715.7px;top:614.7px;font-size:16px;font-weight:bold;color:#fff;transform:scaleX(0.9260)">% DONE</div>
<div class="dt" style="left:812.6px;top:614.7px;font-size:16px;font-weight:bold;color:#fff;transform:scaleX(0.8949)">DUE DATE</div>
<div class="dt" style="left:1008.4px;top:614.7px;font-size:16px;font-weight:bold;color:#fff;transform:scaleX(0.9371)">DRIVER</div>
<div class="dt" style="left:1204.5px;top:614.7px;font-size:16px;font-weight:bold;color:#fff;transform:scaleX(0.9004)">NOTES</div>
<div class="dt" style="left:470.3px;top:810.7px;font-size:16px;font-weight:bold;color:#fff;transform:scaleX(0.8940)">CATEGORY</div>
<div class="dt" style="left:715.1px;top:810.7px;font-size:16px;font-weight:bold;color:#fff;transform:scaleX(0.9155)">SPENT</div>
<div class="dt" style="left:911.1px;top:810.7px;font-size:16px;font-weight:bold;color:#fff;transform:scaleX(0.8751)">% OF TOTAL</div>
<div class="dt" style="left:1057.5px;top:810.7px;font-size:16px;font-weight:bold;color:#fff;transform:scaleX(0.8811)">ON TRACK?</div>
<div class="dt" style="left:1204.6px;top:810.7px;font-size:16px;font-weight:bold;color:#fff;transform:scaleX(0.9004)">NOTES</div>

<div class="abs" style="left:1899px;top:170px;width:19px;height:833px;background:#a6c3ec"></div>
<div class="abs" style="left:1899px;top:198px;width:19px;height:742px;background:linear-gradient(90deg,#a3bde2 0px,#7b9ccb 2px,#7496c6 10px,#7a9bcb 19px);"></div>
<div class="abs" style="left:1900px;top:287px;width:18px;height:212px;border:1px solid #6d7f9d;border-right:none;border-radius:2px 0 0 2px;background:linear-gradient(90deg,#f4f6fa 0px,#e9edf4 6px,#d4dbe7 9px,#bfc9da 12px,#c9d2e1 18px)"></div>
<svg class="abs" style="left:1898px;top:170px" width="20" height="834" viewBox="1898 170 20 834">
<rect x="1904" y="173" width="10" height="2" fill="#2a3654"/>
<g><rect x="1903.500" y="182.500" width="7" height="6" fill="#f3f5f9" stroke="#3a4660" stroke-width=".9"/><rect x="1907.500" y="185.500" width="7" height="6" fill="#f3f5f9" stroke="#3a4660" stroke-width=".9"/><path d="M1905.500 185.500 l3 3 M1909 187 l2.500 3" stroke="#3a4660" stroke-width=".7"/></g>
<path d="M1904 212 l5.500-5 l5.500 5z" fill="#4b6795"/><path d="M1904 212.500 h11" stroke="#6b87b5" stroke-width="1" stroke-dasharray="1 1"/>
<path d="M1904 926.500 h11 l-5.500 5.200z" fill="#4b6795"/>
<path d="M1906 390.500 h8 M1906 392.500 h8 M1906 394.500 h8 M1906 396.500 h8" stroke="#7a88a3" stroke-width="1"/>
<path d="M1906 950.500 l3-3.300 l3 3.300z M1906 953.500 l3-3 l3 3z" fill="#111"/>
<circle cx="1908.700" cy="970.500" r="3.300" fill="#cfd3da" stroke="#222" stroke-width="1"/><circle cx="1907.800" cy="969.600" r="1.200" fill="#fff"/>
<path d="M1906 989.500 h6 l-3 3z M1906 992 h6 l-3 3.300z" fill="#111"/>
</svg>

<!-- STATUS -->
<div id="status" class="abs"></div>
<div class="st" style="left:8px">Page: 1 of 2</div>
<div class="sdv" style="left:86px"></div>
<div class="st" style="left:96px">Words: 117</div>
<div class="sdv" style="left:171px"></div>
<div class="st" style="left:181px">English (United States)</div>
<div class="sdv" style="left:319px"></div>
<div class="sdv" style="left:1578px"></div>
<div class="abs" style="left:1585px;top:1005px;width:114px;height:24px;border:1px solid #9ab7e0;border-radius:3px;background:linear-gradient(#dce9fb 0%,#cfe0f8 45%,#b9d2f4 50%,#c9ddf8 100%)"></div>
<div class="abs" style="left:1586px;top:1006px;width:22px;height:22px;border-radius:2px 0 0 2px;background:linear-gradient(#fbd9a6 0px,#fbcf8e 7px,#f8b24a 8px,#fac669 15px,#fde08a 22px)"></div>
<div class="abs" style="left:1608px;top:1006px;width:1px;height:22px;background:#9ab7e0"></div>
<div class="abs" style="left:1630px;top:1006px;width:1px;height:22px;background:#9ab7e0"></div>
<div class="abs" style="left:1652px;top:1006px;width:1px;height:22px;background:#9ab7e0"></div>
<div class="abs" style="left:1675px;top:1006px;width:1px;height:22px;background:#9ab7e0"></div>
<div class="st" style="left:1708px;top:1010px;transform:scaleX(.92);transform-origin:0 50%">100%</div>
<svg class="abs" style="left:1580px;top:1003px" width="338" height="27" viewBox="1580 1003 338 27">
<defs><radialGradient id="zb" cx="50%" cy="35%" r="70%"><stop offset="0" stop-color="#ffffff"/><stop offset=".6" stop-color="#dfe9f7"/><stop offset="1" stop-color="#b5cbea"/></radialGradient></defs>
<!-- print layout -->
<rect x="1591.500" y="1010.500" width="12" height="13" fill="#fff" stroke="#333" stroke-width="1.200"/><path d="M1594 1014.500 h7 M1594 1017 h7 M1594 1019.500 h7" stroke="#555" stroke-width="1"/>
<!-- reading -->
<path d="M1613 1011.500 h5.500 l1 1 l1-1 h5.500 v11 h-5.500 l-1 1 l-1-1 h-5.500z" fill="#f4f6fa" stroke="#444" stroke-width="1"/><path d="M1619.500 1012.500 v11 M1614.800 1014.500 h3 M1614.800 1017 h3 M1614.800 1019.500 h3 M1621.300 1014.500 h3 M1621.300 1017 h3 M1621.300 1019.500 h3" stroke="#555" stroke-width=".8"/>
<!-- web -->
<rect x="1634.500" y="1010.500" width="11" height="10" fill="#f7f8fb" stroke="#444" stroke-width="1"/><path d="M1636.500 1013.500 h7 M1636.500 1016 h7" stroke="#777" stroke-width=".9"/><circle cx="1645" cy="1021.500" r="3.600" fill="#2f7dd0" stroke="#1d4f96" stroke-width=".6"/><path d="M1643 1020.500 q2-2 3.500 0 q-1 2.500-3 2z" fill="#59b04a"/>
<!-- outline -->
<path d="M1658 1012.500 h10 M1661 1015.500 h8 M1661 1018.500 h8 M1658 1021.500 h8" stroke="#666" stroke-width="1.200"/><path d="M1656 1015.500 h2 M1656 1018.500 h2" stroke="#888" stroke-width="1"/>
<!-- draft -->
<path d="M1680 1011.500 h13 M1680 1014.500 h13 M1680 1017.500 h13 M1680 1020.500 h13 M1680 1023 h13" stroke="#444" stroke-width="1.300"/>
<!-- zoom slider -->
<path d="M1768 1017.500 h128" stroke="#7f9dcb" stroke-width="1"/><path d="M1768 1018.500 h128" stroke="#eef4fd" stroke-width="1"/>
<circle cx="1758" cy="1016" r="9" fill="url(#zb)" stroke="#6f8dbd" stroke-width="1"/><path d="M1753 1016 h10" stroke="#4a6390" stroke-width="2"/>
<circle cx="1904.700" cy="1016" r="9" fill="url(#zb)" stroke="#6f8dbd" stroke-width="1"/><path d="M1899.700 1016 h10 M1904.700 1011 v10" stroke="#4a6390" stroke-width="2"/>
<path d="M1827 1008.500 h9.500 v10 l-4.750 5 l-4.750-5z" fill="#eef3fa" stroke="#6a7f9f" stroke-width="1"/><path d="M1831.750 1011 v9" stroke="#b7c4d8" stroke-width="1"/>
</svg>

</body>
</html>
